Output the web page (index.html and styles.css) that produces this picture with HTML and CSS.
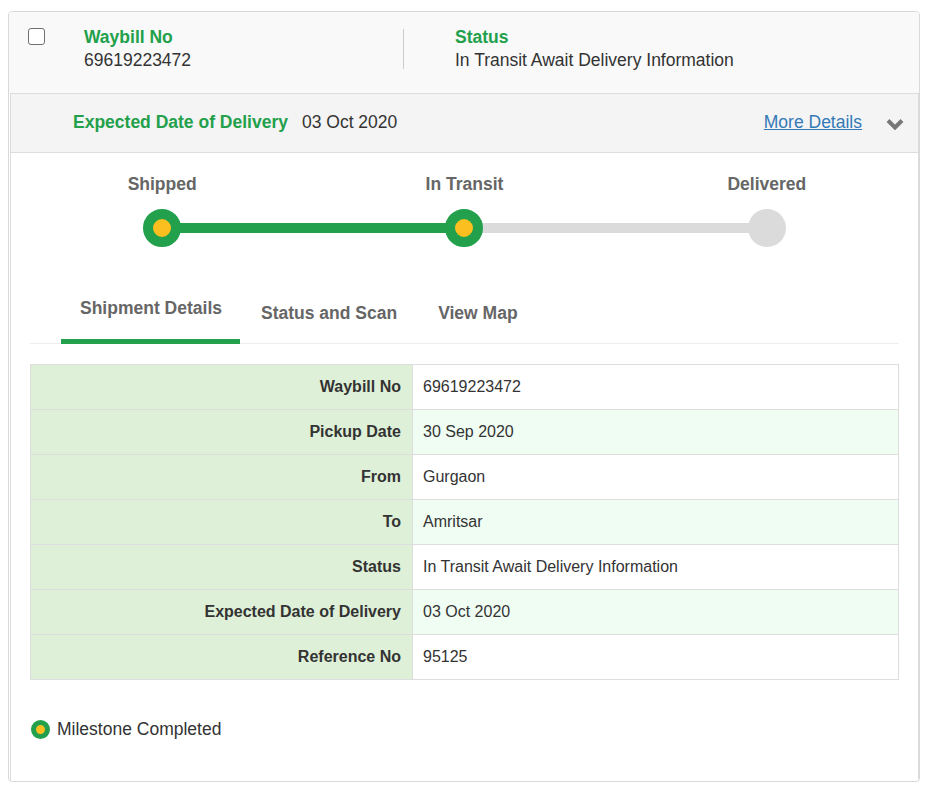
FILE: index.html
```html
<!DOCTYPE html>
<html lang="en">
<head>
<meta charset="utf-8">
<title>Shipment Tracking</title>
<link rel="stylesheet" href="styles.css">
</head>
<body>
<div class="card">
  <div class="card-head">
    <span class="check" role="checkbox" aria-checked="false"></span>
    <div class="head-col waybill">
      <div class="head-label">Waybill No</div>
      <div class="head-value">69619223472</div>
    </div>
    <span class="head-divider"></span>
    <div class="head-col">
      <div class="head-label">Status</div>
      <div class="head-value">In Transit Await Delivery Information</div>
    </div>
  </div>

  <div class="panel">
    <div class="eta-bar">
      <span class="eta-label">Expected Date of Delivery</span>
      <span class="eta-date">03 Oct 2020</span>
      <a class="more-link" href="#">More Details</a>
      <svg class="chevron" width="18" height="12" viewBox="0 0 18 12" aria-hidden="true">
        <path d="M2 2.5 L9 9.5 L16 2.5" fill="none" stroke="#777" stroke-width="4" stroke-linejoin="miter"/>
      </svg>
    </div>

    <div class="tracker">
      <div class="step done line-done">
        <div class="step-label">Shipped</div>
        <span class="dot"></span>
      </div>
      <div class="step done line-todo">
        <div class="step-label">In Transit</div>
        <span class="dot"></span>
      </div>
      <div class="step">
        <div class="step-label">Delivered</div>
        <span class="dot"></span>
      </div>
    </div>

    <div class="content">
      <ul class="tabs">
        <li class="tab active">Shipment Details</li>
        <li class="tab">Status and Scan</li>
        <li class="tab">View Map</li>
      </ul>

      <table class="details">
        <tbody>
          <tr><th>Waybill No</th><td>69619223472</td></tr>
          <tr><th>Pickup Date</th><td>30 Sep 2020</td></tr>
          <tr><th>From</th><td>Gurgaon</td></tr>
          <tr><th>To</th><td>Amritsar</td></tr>
          <tr><th>Status</th><td>In Transit Await Delivery Information</td></tr>
          <tr><th>Expected Date of Delivery</th><td>03 Oct 2020</td></tr>
          <tr><th>Reference No</th><td>95125</td></tr>
        </tbody>
      </table>

      <div class="legend">
        <span class="legend-dot"></span>
        <span>Milestone Completed</span>
      </div>
    </div>
  </div>
</div>
</body>
</html>
```

FILE: styles.css
```css
* {
  box-sizing: border-box;
}

body {
  margin: 0;
  background: #fff;
  font-family: "Liberation Sans", Arial, sans-serif;
  font-size: 17.5px;
  line-height: 23px;
  color: #333;
}

.card {
  width: 912px;
  margin: 11px 0 0 8px;
  border: 1px solid #d9d9d9;
  border-radius: 4px;
  background: #fff;
  overflow: hidden;
}

/* summary row */
.card-head {
  display: flex;
  align-items: flex-start;
  padding: 14px 20px 21px 19px;
  background: #f9f9f9;
}

.check {
  width: 17px;
  height: 17px;
  margin-top: 2px;
  border: 1px solid #707070;
  border-radius: 3px;
  background: #fff;
  flex: none;
}

.head-col {
  flex: none;
}

.waybill {
  width: 319px;
  margin-left: 39px;
}

.head-label {
  color: #22a04b;
  font-weight: bold;
}

.head-value {
  color: #333;
}

.head-divider {
  width: 1px;
  height: 40px;
  margin: 3px 51px 0 0;
  background: #ccc;
  flex: none;
}

/* details panel */
.panel {
  margin-left: 1px;
  border: 1px solid #ddd;
  border-bottom: none;
}

.eta-bar {
  display: flex;
  align-items: center;
  padding: 17px 14px 18px 62px;
  background: #f4f4f4;
  border-bottom: 1px solid #ddd;
  margin-top: -1px;
  border-top: 1px solid #ddd;
}

.eta-label {
  color: #22a04b;
  font-weight: bold;
}

.eta-date {
  margin-left: 14px;
}

.more-link {
  margin-left: auto;
  color: #337ab7;
  text-decoration: underline;
}

.chevron {
  display: block;
  margin-left: 24px;
  margin-top: 2px;
}

/* milestone tracker */
.tracker {
  display: grid;
  grid-template-columns: repeat(3, 1fr);
  padding-top: 20px;
}

.step {
  position: relative;
  display: flex;
  flex-direction: column;
  align-items: center;
}

.step-label {
  color: #666;
  font-weight: bold;
}

.dot {
  position: relative;
  z-index: 1;
  width: 38px;
  height: 38px;
  margin-top: 13px;
  border-radius: 50%;
  background: #dcdbdc;
}

.step.done .dot {
  background: #fbbf1f;
  border: 10px solid #22a04b;
}

.line-done::after,
.line-todo::after {
  content: "";
  position: absolute;
  left: 50%;
  width: 100%;
  top: 50px;
  height: 10px;
}

.line-done::after {
  background: #22a04b;
}

.line-todo::after {
  background: #dcdbdc;
}

.content {
  padding: 0 19px 40px 19px;
}

/* tabs */
.tabs {
  display: flex;
  align-items: flex-end;
  list-style: none;
  margin: 39px 0 0;
  padding: 0 0 0 31px;
  border-bottom: 1px solid #eee;
}

.tab {
  padding: 11px 20px 19px 21px;
  margin-bottom: -1px;
  color: #666;
  font-weight: bold;
}

.tab.active {
  padding-left: 19px;
  padding-right: 18px;
  border-bottom: 5px solid #22a04b;
}

/* shipment details table */
.details {
  width: 100%;
  margin-top: 20px;
  border-collapse: collapse;
  font-size: 16px;
  line-height: 22px;
}

.details th,
.details td {
  padding: 11px 10px;
  border: 1px solid #ddd;
  text-align: left;
  color: #333;
}

.details th {
  width: 382px;
  padding-right: 11px;
  text-align: right;
  font-weight: bold;
  background: #dff0d8;
}

.details td {
  background: #fff;
}

.details tr:nth-child(even) td {
  background: #f0fdf3;
}

/* legend */
.legend {
  display: flex;
  align-items: center;
  margin-top: 38px;
}

.legend-dot {
  width: 19px;
  height: 19px;
  margin: 0 7px 0 1px;
  border-radius: 50%;
  background: #fbbf1f;
  border: 5px solid #22a04b;
}
```
